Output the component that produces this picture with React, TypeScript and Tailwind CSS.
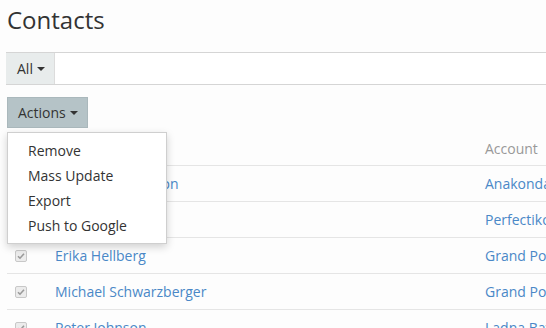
import React from "react";

const Caret = () => (
  <span className="inline-block ml-[4px] align-middle w-0 h-0 border-l-[4px] border-r-[4px] border-t-[4px] border-l-transparent border-r-transparent border-t-[#333]" />
);

const Check = () => (
  <span className="w-[12px] h-[12px] rounded-[2px] border border-[#c8c8c8] bg-[#ececec] flex items-center justify-center">
    <svg width="8" height="8" viewBox="0 0 8 8">
      <path d="M1 4.2 L3 6.2 L7 1.8" stroke="#9a9a9a" strokeWidth="1.6" fill="none" />
    </svg>
  </span>
);

const rows = [
  { name: "Jonathan Robinson", account: "Anakonda Ltd" },
  { name: "Tom Smith", account: "Perfectiko Ltd" },
  { name: "Erika Hellberg", account: "Grand Post" },
  { name: "Michael Schwarzberger", account: "Grand Post" },
  { name: "Peter Johnson", account: "Ladna Bay" },
];

export default function App() {
  return (
    <div
      className="relative w-[546px] h-[328px] overflow-hidden bg-[#fdfdfd] text-[#333]"
      style={{ fontFamily: '"Open Sans", "Liberation Sans", sans-serif' }}
    >
      <div className="pl-[7px] pt-[4px]">
        <h1 className="text-[24px] leading-[32px] font-normal text-[#333]">Contacts</h1>
      </div>
      <div className="mt-[16px] ml-[6px] flex h-[33px] w-[600px] border-y border-[#d5d5d5]">
        <div className="w-[49px] bg-[#e8ecec] flex items-center pl-[11px] text-[14px] text-[#333] border-r border-[#dcdcdc]">
          All<Caret />
        </div>
        <div className="flex-1 bg-white" />
      </div>
      <div className="mt-[12px] ml-[7px] w-[81px] h-[31px] bg-[#b5c3c7] border border-[#aab8bc] flex items-center pl-[10px] text-[14px] text-[#333]">
        Actions<Caret />
      </div>
      <div className="ml-[7px] w-[600px] text-[14px]">
        <div className="h-[38px] flex items-end pb-[6px] border-b border-[#e5e5e5]">
          <div className="w-[478px]" />
          <div className="text-[#999]">Account</div>
        </div>
        {rows.map((r, i) => (
          <div key={i} className="h-[36px] flex items-center border-b border-[#e5e5e5]">
            <div className="w-[48px] pl-[8px]">
              <Check />
            </div>
            <div className="w-[430px] text-[#4a88c7]">{r.name}</div>
            <div className="text-[#4a88c7] whitespace-nowrap">{r.account}</div>
          </div>
        ))}
      </div>
      <div className="absolute left-[7px] top-[132px] w-[160px] bg-white border border-[#cfcfcf] shadow-[0_3px_8px_rgba(0,0,0,0.18)] py-[5px] text-[14px] text-[#333]">
        {["Remove", "Mass Update", "Export", "Push to Google"].map((t) => (
          <div key={t} className="h-[25px] leading-[25px] pl-[20px]">
            {t}
          </div>
        ))}
      </div>
    </div>
  );
}
